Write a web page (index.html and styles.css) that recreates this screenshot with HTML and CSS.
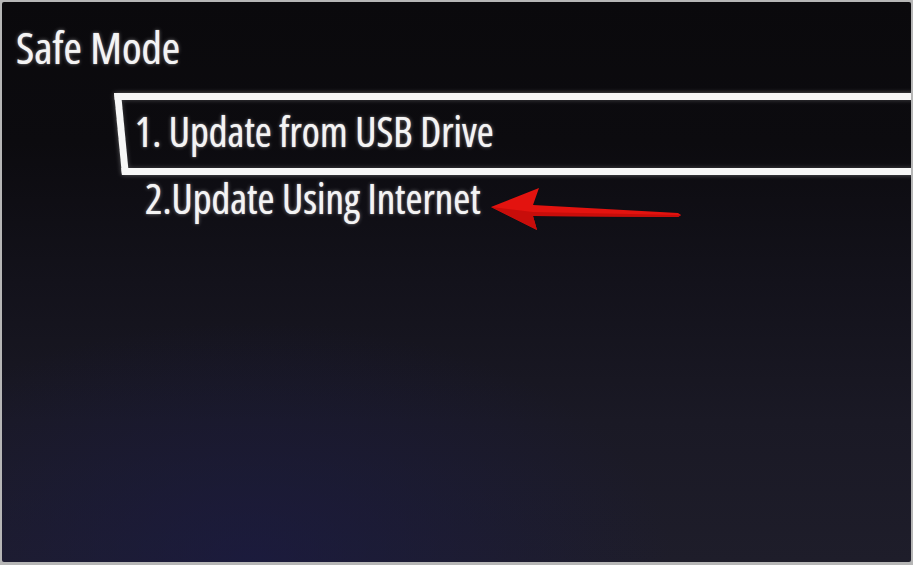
FILE: index.html
```html
<!DOCTYPE html>
<html lang="en">
<head>
<meta charset="utf-8">
<title>Safe Mode</title>
<link rel="stylesheet" href="styles.css">
</head>
<body>
<div class="screen">
  <h1 class="title">Safe Mode</h1>
  <ul class="menu">
    <li class="item selected"><span class="label">1. Update from USB Drive</span></li>
    <li class="item second"><span class="label">2.Update Using Internet</span></li>
  </ul>
  <svg class="arrow" viewBox="0 0 909 560" width="909" height="560" aria-hidden="true">
    <polygon points="489,205 537,186 531,203 676,211 679,213 676,215 531,214 535,228" fill="#e3130f"/>
    <polygon points="489,205 531,210 676,213 679,213 676,215 531,214 535,228" fill="#c80d0a"/>
  </svg>
</div>
</body>
</html>
```

FILE: styles.css
```css
html, body {
  margin: 0;
  padding: 0;
}
body {
  background: #b6b6b6;
  width: 913px;
  height: 565px;
  overflow: hidden;
}
.screen {
  position: relative;
  margin: 2px 0 0 2px;
  width: 909px;
  height: 560px;
  overflow: hidden;
  border-radius: 2px;
  background:
    radial-gradient(ellipse 420px 240px at 250px 560px, rgba(26, 26, 68, 0.7), rgba(26, 26, 68, 0) 100%),
    linear-gradient(180deg, #0a090c 0%, #0c0b0f 25%, #13121b 50%, #1a1925 75%, #1e1d2a 100%);
  font-family: "Open Sans", "Noto Sans", sans-serif;
  color: #f4f4f4;
}
.title {
  margin: 0;
  padding: 25px 0 0 14px;
  font-size: 44.5px;
  line-height: 40px;
  font-weight: 500;
  font-stretch: 75%;
  text-shadow: 0 0 1px rgba(255, 255, 255, 0.8), 0 0 4px rgba(255, 255, 255, 0.4);
}
.menu {
  list-style: none;
  margin: 26px 0 0 0;
  padding: 0;
}
.item {
  font-size: 41px;
  font-weight: 500;
  font-stretch: 75%;
  white-space: nowrap;
  text-shadow: 0 0 1px rgba(255, 255, 255, 0.8), 0 0 4px rgba(255, 255, 255, 0.4);
}
.selected {
  margin-left: 116px;
  width: 900px;
  border: 7px solid #f7f7f7;
  border-right: none;
  line-height: 62px;
  padding: 0 0 6px 10px;
  transform: skewX(5.5deg);
  box-shadow: 0 0 5px rgba(255, 255, 255, 0.35), inset 0 0 5px rgba(255, 255, 255, 0.25);
}
.selected .label {
  display: inline-block;
  transform: skewX(-5.5deg);
}
.second {
  margin-top: -2px;
  padding-left: 143px;
  line-height: 50px;
}
.arrow {
  position: absolute;
  left: 0;
  top: 0;
  pointer-events: none;
}
```
